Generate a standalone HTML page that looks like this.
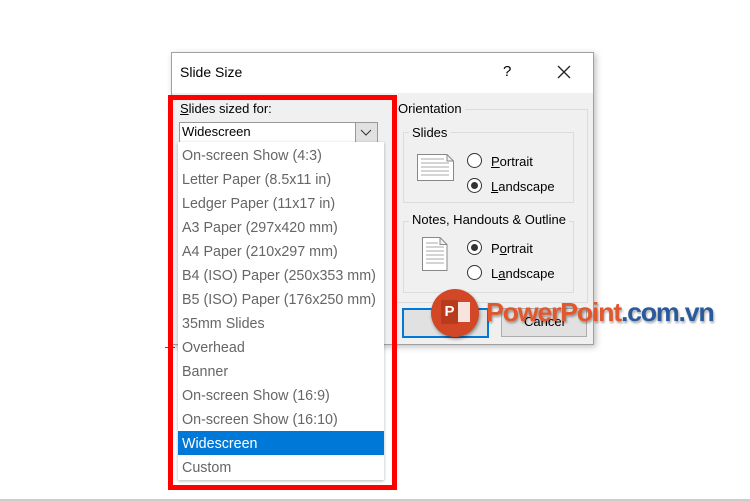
<!DOCTYPE html>
<html><head><style>
body{margin:0;width:750px;height:501px;background:#fff;position:relative;overflow:hidden;font-family:"Liberation Sans",sans-serif;}
.a{position:absolute;}
.dlg{left:171px;top:52px;width:421px;height:291px;background:#f0f0f0;border:1px solid #a0a0a0;box-shadow:2px 2px 6px rgba(0,0,0,.25);}
.tb{left:0;top:0;width:421px;height:40px;background:#fff;}
.t{font-size:14px;color:#000;}
.grp{border:1px solid #dcdcdc;}
.lg{background:#f0f0f0;padding:0 3px;font-size:13px;}
.rad{width:13px;height:13px;border:1px solid #333;border-radius:50%;background:#fff;}
.rad.on::after{content:"";position:absolute;left:3px;top:3px;width:7px;height:7px;border-radius:50%;background:#333;}
.list{left:178px;top:142px;width:206px;height:338px;background:#fff;box-shadow:0 1px 3px rgba(0,0,0,.3);}
.it{position:absolute;left:4px;font-size:14.3px;color:#666;height:24px;line-height:24px;}
</style></head><body>
<div class="a" style="left:0;top:499px;width:750px;height:2px;background:#ccc"></div>
<div class="a" style="left:165px;top:347px;width:10px;height:1px;background:#555"></div>
<div class="a dlg">
 <div class="a tb"></div>
 <div class="a t" style="left:8px;top:11px">Slide Size</div>
 <div class="a t" style="left:331px;top:10px;font-size:15px">?</div>
 <svg class="a" style="left:385px;top:12px" width="14" height="14"><path d="M1 1L13 13M13 1L1 13" stroke="#222" stroke-width="1.3"/></svg>
 <div class="a" style="left:8px;top:48px;font-size:13px"><u>S</u>lides sized for:</div>
 <div class="a" style="left:7px;top:69px;width:197px;height:19px;background:#fff;border:1px solid #999"></div>
 <div class="a" style="left:10px;top:71px;font-size:13px">Widescreen</div>
 <div class="a" style="left:183px;top:70px;width:21px;height:19px;background:#e1e1e1;border-left:1px solid #999"></div>
 <svg class="a" style="left:188px;top:76px" width="12" height="8"><path d="M1 1L6 6L11 1" stroke="#333" fill="none"/></svg>
 <div class="a grp" style="left:220px;top:56px;width:194px;height:192px"></div>
 <div class="a lg" style="left:223px;top:48px">Orientation</div>
 <div class="a grp" style="left:231px;top:79px;width:169px;height:69px"></div>
 <div class="a lg" style="left:237px;top:72px">Slides</div>
 <svg class="a" style="left:245px;top:101px" width="38" height="28"><path d="M0.5 0.5H30L36.5 7V26.5H0.5Z M30 0.5V7H36.5" fill="#fff" stroke="#888"/><path d="M4 5H27M4 9H32M4 13H32M4 17H32M4 21H32" stroke="#aaa"/></svg>
 <div class="a rad" style="left:295px;top:100px"></div>
 <div class="a" style="left:319px;top:101px;font-size:13px"><u>P</u>ortrait</div>
 <div class="a rad on" style="left:295px;top:125px"></div>
 <div class="a" style="left:319px;top:126px;font-size:13px"><u>L</u>andscape</div>
 <div class="a grp" style="left:231px;top:168px;width:169px;height:70px"></div>
 <div class="a lg" style="left:237px;top:159px">Notes, Handouts &amp; Outline</div>
 <svg class="a" style="left:250px;top:184px" width="26" height="34"><path d="M0.5 0.5H18L25 7.5V33.5H0.5Z M18 0.5V7.5H25" fill="#fff" stroke="#888"/><path d="M4 6H16M4 10H22M4 14H22M4 18H22M4 22H22M4 26H22" stroke="#aaa"/></svg>
 <div class="a rad on" style="left:295px;top:187px"></div>
 <div class="a" style="left:319px;top:188px;font-size:13px">P<u>o</u>rtrait</div>
 <div class="a rad" style="left:295px;top:212px"></div>
 <div class="a" style="left:319px;top:213px;font-size:13px">L<u>a</u>ndscape</div>
 <div class="a" style="left:230px;top:255px;width:83px;height:26px;border:2px solid #0078d7;background:#e1e1e1"></div>
 <div class="a" style="left:329px;top:255px;width:84px;height:27px;border:1px solid #adadad;background:#e1e1e1"></div>
 <div class="a" style="left:352px;top:261px;font-size:13px">Cancel</div>
</div>
<div class="a list">
 <div class="it" style="top:2px">On-screen Show (4:3)</div>
 <div class="it" style="top:26px">Letter Paper (8.5x11 in)</div>
 <div class="it" style="top:50px">Ledger Paper (11x17 in)</div>
 <div class="it" style="top:74px">A3 Paper (297x420 mm)</div>
 <div class="it" style="top:98px">A4 Paper (210x297 mm)</div>
 <div class="it" style="top:122px">B4 (ISO) Paper (250x353 mm)</div>
 <div class="it" style="top:146px">B5 (ISO) Paper (176x250 mm)</div>
 <div class="it" style="top:170px">35mm Slides</div>
 <div class="it" style="top:194px">Overhead</div>
 <div class="it" style="top:218px">Banner</div>
 <div class="it" style="top:242px">On-screen Show (16:9)</div>
 <div class="it" style="top:266px">On-screen Show (16:10)</div>
 <div class="a" style="left:0;top:289px;width:206px;height:24px;background:#0078d7"></div>
 <div class="it" style="top:290px;color:#fff">Widescreen</div>
 <div class="it" style="top:314px">Custom</div>
</div>
<div class="a" style="left:168px;top:95px;width:219px;height:385px;border:5px solid #f00"></div>
<div class="a" style="left:431px;top:289px;width:48px;height:48px;border-radius:50%;background:#d24726;box-shadow:1px 2px 3px rgba(0,0,0,.4)"></div>
<div class="a" style="left:441px;top:300px;width:17px;height:24px;background:#b83b1e;color:#fff;font-weight:bold;font-size:15px;line-height:24px;text-align:center">P</div>
<div class="a" style="left:458px;top:302px;width:12px;height:20px;background:#fff;opacity:.85"></div>
<div class="a" style="left:486px;top:297px;font-size:26px;font-weight:bold;letter-spacing:-1.2px;transform:scaleX(1.03);transform-origin:left;text-shadow:1px 2px 2px rgba(0,0,0,.35);white-space:nowrap"><span style="color:#e2572c">PowerPoint</span><span style="color:#2a5a9c">.com.vn</span></div>
</body></html>
